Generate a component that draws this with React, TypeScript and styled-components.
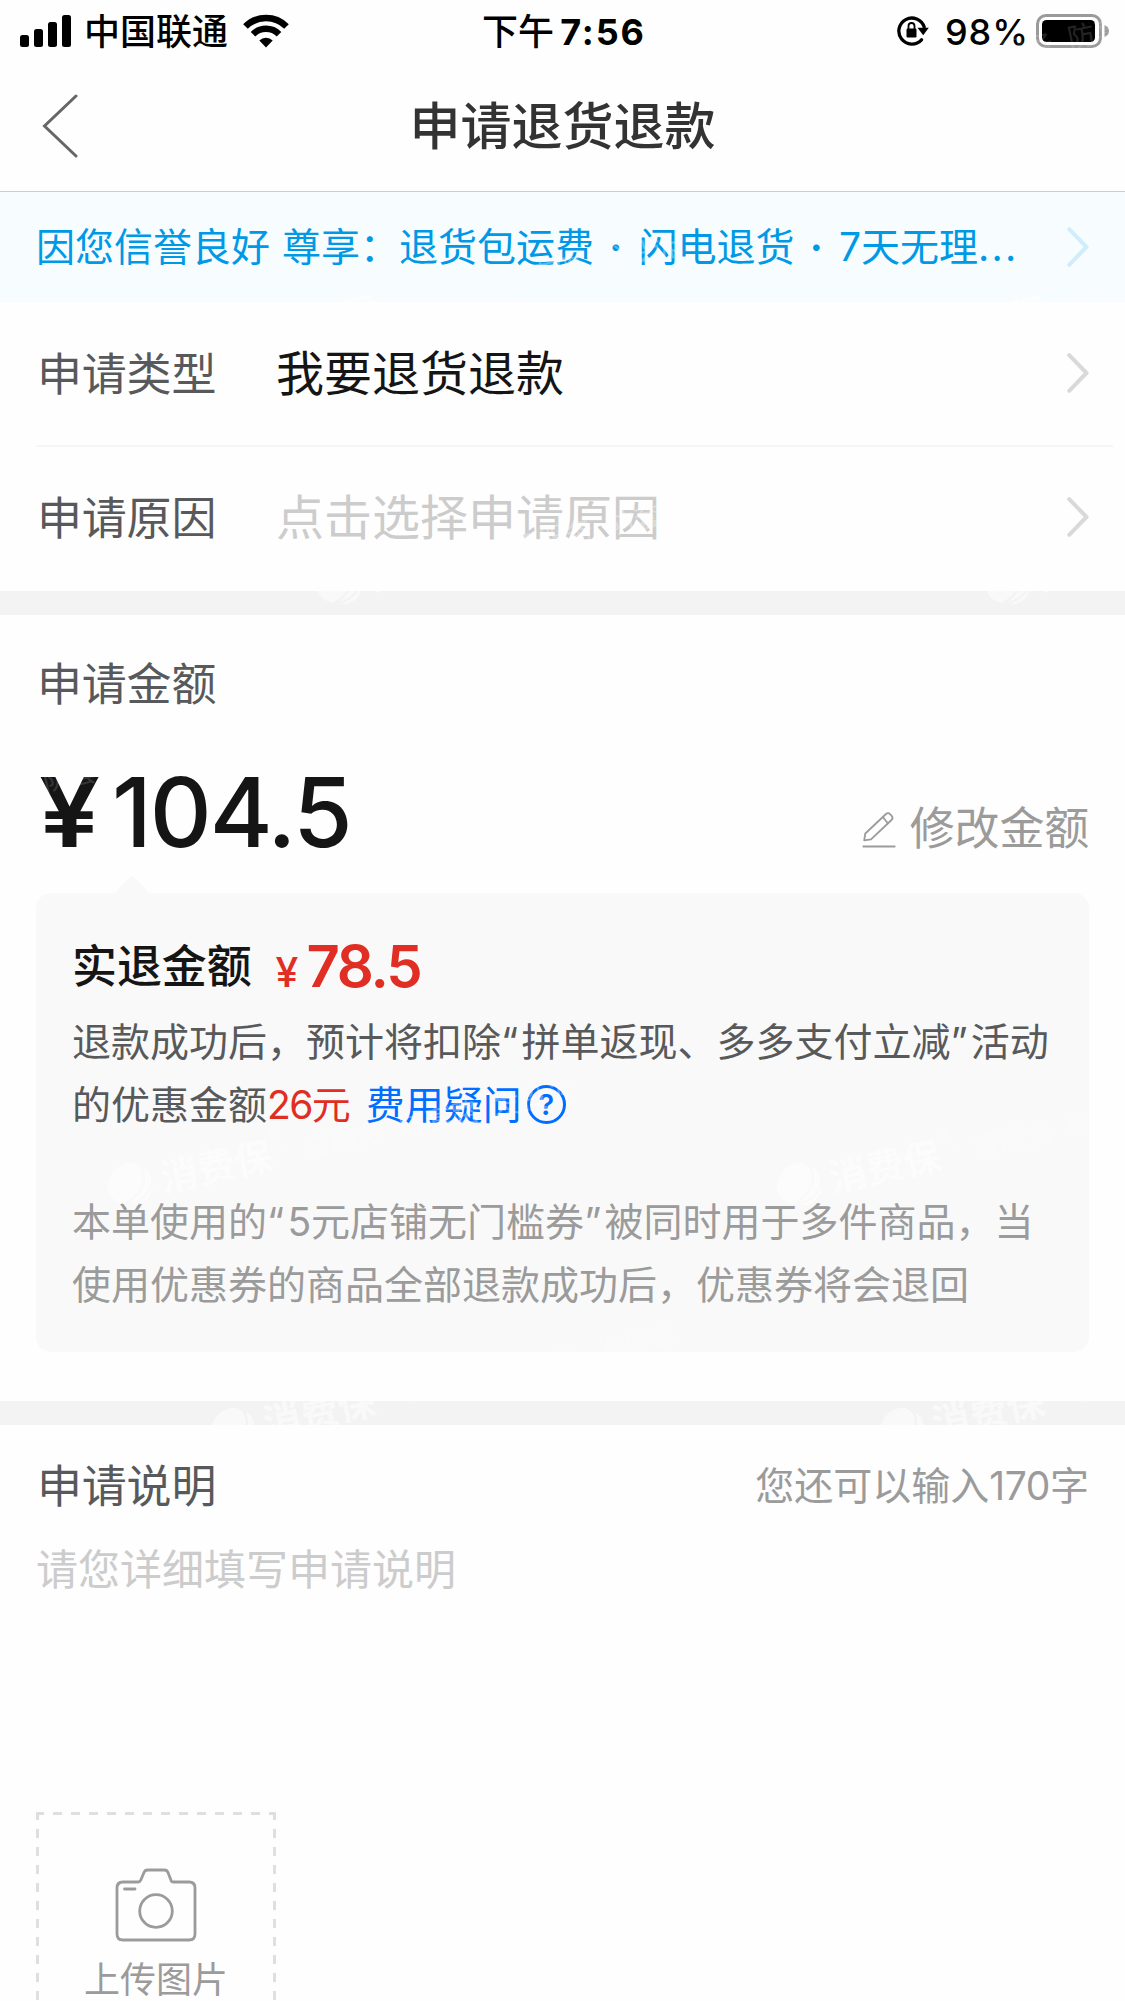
import React from "react";
import styled, { createGlobalStyle } from "styled-components";

const GlobalStyle = createGlobalStyle`
  * { box-sizing: border-box; }
  html, body { margin: 0; padding: 0; background: #fff; }
  body { overflow: hidden; }
`;

const Screen = styled.main`
  position: relative;
  width: 1125px;
  height: 2001px;
  overflow: hidden;
  background: #fefefe;
  color: #58595b;
  font-family: Inter, "Noto Sans CJK SC", sans-serif;
  display: flex;
  flex-direction: column;
  white-space: nowrap;
`;

const StatusBar = styled.header`
  height: 60px;
  flex: none;
  display: grid;
  grid-template-columns: 1fr auto 1fr;
  align-items: center;
  padding: 0 16px 0 20px;
  color: #000;
  font-size: 36px;
  line-height: 60px;
`;

const StatusGroup = styled.div<{ $end?: boolean }>`
  display: flex;
  align-items: center;
  height: 60px;
  justify-content: ${(p) => (p.$end ? "flex-end" : "flex-start")};
`;

const Carrier = styled.span`
  margin: 0 15px 0 12px;
  padding-top: 2px;
  font-weight: 500;
`;

const Clock = styled.div`
  display: flex;
  gap: 6px;
  padding: 2px 1px 0 0;
  font-weight: 500;
`;

const ClockDigits = styled.span`
  font-weight: 700;
  letter-spacing: 1.9px;
`;

const BatteryPercent = styled.span`
  margin: 0 7px 0 15px;
  padding-top: 2px;
  font-weight: 500;
  letter-spacing: 1px;
`;

const NavBar = styled.nav`
  height: 132px;
  flex: none;
  border-bottom: 1px solid #ccc;
  display: grid;
  grid-template-columns: 120px 1fr 120px;
  align-items: center;
  padding: 0;
`;

const BackButton = styled.button`
  border: 0;
  background: none;
  padding: 0 0 0 42px;
  height: 100%;
  display: flex;
  align-items: center;
`;

const Title = styled.h1`
  margin: 0;
  padding-top: 2px;
  text-align: center;
  font-size: 51px;
  line-height: 72px;
  font-weight: 500;
  color: #333;
`;

const Notice = styled.section`
  height: 110px;
  flex: none;
  display: flex;
  align-items: center;
  justify-content: space-between;
  padding: 0 36px;
  background: #f7fcff;
  color: #0099e5;
  font-size: 39px;
  line-height: 60px;
`;

const NoticeText = styled.span`
  word-spacing: 1px;
`;

const Dot = styled.span`
  margin: 0 6px 0 5px;
  font-weight: 700;
`;

const Ellipsis = styled.span`
  letter-spacing: 2.2px;
`;

const Row = styled.section<{ $height: number; $lift?: number }>`
  height: ${(p) => p.$height}px;
  flex: none;
  display: flex;
  align-items: center;
  padding: 0 36px ${(p) => p.$lift ?? 0}px;
`;

const Label = styled.span`
  padding: 2px 0 0 1px;
  font-size: 45px;
  line-height: 66px;
  letter-spacing: -0.2px;
`;

const RowLabel = styled(Label)`
  width: 240px;
`;

const RowValue = styled.span<{ $placeholder?: boolean }>`
  flex: 1;
  font-size: 48px;
  line-height: 66px;
  color: ${(p) => (p.$placeholder ? "#ccc" : "#151516")};
`;

const RowArrow = styled.span`
  display: flex;
  padding-bottom: 2px;
`;

const Divider = styled.hr`
  width: 1077px;
  height: 2px;
  flex: none;
  margin: 0 0 0 36px;
  border: 0;
  background: #f6f6f6;
`;

const Band = styled.div`
  height: 24px;
  flex: none;
  background: #f3f3f3;
`;

const AmountSection = styled.section`
  height: 786px;
  flex: none;
  padding: 35px 36px 0;
  display: flex;
  flex-direction: column;
`;

const AmountLine = styled.div`
  height: 174px;
  display: flex;
  align-items: flex-end;
  justify-content: space-between;
`;

const Amount = styled.div`
  display: flex;
  gap: 19px;
  padding: 0 0 22px 3px;
  font-size: 96px;
  line-height: 116px;
  font-weight: 600;
  color: #151516;
`;

const Yuan = styled.span`
  transform: scaleX(1.13);
  transform-origin: 0 50%;
`;

const AmountDigits = styled.span`
  font-weight: 500;
  letter-spacing: -2.1px;
`;

const EditButton = styled.button`
  border: 0;
  background: none;
  padding: 0 0 30px;
  display: flex;
  align-items: center;
  gap: 14px;
  font: inherit;
  font-size: 45px;
  line-height: 66px;
  letter-spacing: -0.2px;
  color: #9b9b9b;
`;

const Card = styled.article`
  position: relative;
  width: 1053px;
  height: 459px;
  margin-top: 1px;
  padding: 36px 36px 0;
  border-radius: 15px;
  background: #f9f9f9;
`;

const CardArrow = styled.svg`
  position: absolute;
  left: 78px;
  top: -18px;
`;

const RefundLine = styled.div`
  height: 81px;
  display: flex;
  align-items: flex-start;
`;

const RefundTitle = styled.strong`
  padding-top: 5px;
  font-size: 45px;
  line-height: 66px;
  font-weight: 500;
  letter-spacing: -0.1px;
  color: #151516;
`;

const RefundPrice = styled.span`
  display: flex;
  align-items: baseline;
  gap: 8px;
  margin-left: 24px;
  padding-top: 4px;
  color: #e02e24;
`;

const RefundYuan = styled.span`
  font-size: 41px;
  line-height: 66px;
  font-weight: 500;
`;

const RefundDigits = styled.span`
  font-size: 58px;
  line-height: 66px;
  font-weight: 600;
  letter-spacing: -2.2px;
`;

const Paragraph = styled.p<{ $muted?: boolean }>`
  margin: ${(p) => (p.$muted ? "54px 0 0" : "0")};
  font-size: 39px;
  line-height: 63px;
  color: ${(p) => (p.$muted ? "#9b9b9b" : "#58595b")};
`;

const Line = styled.span`
  display: flex;
  align-items: center;
  height: 63px;
`;

const Quote = styled.span`
  letter-spacing: 3.2px;
`;

const Deduction = styled.span`
  color: #e02e24;
  margin-right: 15px;
`;

const DeductionDigits = styled.span`
  letter-spacing: -1.6px;
`;

const HelpLink = styled.a`
  display: flex;
  align-items: center;
  gap: 5px;
  color: #006eff;
`;

const HelpBadge = styled.span`
  width: 39px;
  height: 39px;
  border: 3px solid #006eff;
  border-radius: 50%;
  display: flex;
  align-items: center;
  justify-content: center;
  font-size: 29px;
  line-height: 33px;
  font-weight: 600;
`;

const NoteHeader = styled.div`
  height: 66px;
  flex: none;
  margin-top: 28px;
  padding: 0 36px;
  display: flex;
  align-items: center;
  justify-content: space-between;
`;

const Counter = styled.span`
  font-size: 39px;
  line-height: 66px;
  color: #9b9b9b;
`;

const CounterDigits = styled.span`
  letter-spacing: -0.4px;
`;

const NotePlaceholder = styled.div`
  height: 277px;
  flex: none;
  margin-top: 17px;
  padding: 1px 36px 0;
  font-size: 42px;
  line-height: 66px;
  color: #ccc;
`;

const dash = (dir: string) =>
  `repeating-linear-gradient(${dir}, #dfdfdf 0 8px, transparent 8px 17px, #dfdfdf 17px 18px)`;

const UploadBox = styled.button`
  width: 240px;
  height: 240px;
  flex: none;
  margin: -1px 0 0 36px;
  padding: 56px 0 0;
  border: 0;
  background-color: transparent;
  background-image: ${dash("90deg")}, ${dash("180deg")}, ${dash("180deg")};
  background-size: 240px 3px, 3px 240px, 3px 240px;
  background-position: 0 0, 0 0, 237px 0;
  background-repeat: no-repeat;
  display: flex;
  flex-direction: column;
  align-items: center;
  gap: 12px;
  font: inherit;
  font-size: 36px;
  line-height: 52px;
  color: #9b9b9b;
`;

const WatermarkLayer = styled.div`
  position: absolute;
  inset: 0;
  overflow: hidden;
  pointer-events: none;
`;

const Watermark = styled.div<{ $x: number; $y: number }>`
  position: absolute;
  left: ${(p) => p.$x - 23}px;
  top: ${(p) => p.$y - 23}px;
  height: 46px;
  display: flex;
  align-items: center;
  transform: rotate(-12deg);
  transform-origin: 23px 23px;
  color: #fff;
  font-size: 27px;
  line-height: 46px;
`;

const WatermarkLogo = styled.svg`
  opacity: 0.55;
`;

const WatermarkBrand = styled.b`
  margin-left: 8px;
  font-size: 38px;
  opacity: 0.5;
`;

const WatermarkMark = styled.span`
  font-size: 21px;
  line-height: 22px;
  margin: -36px -4px 0 0;
  opacity: 0.45;
`;

const WatermarkSlogan = styled.span<{ $faint?: boolean }>`
  word-spacing: 8px;
  opacity: ${(p) => (p.$faint ? 0.14 : 0.32)};
`;

const Chevron = ({ color }: { color: string }) => (
  <svg width="22" height="40" viewBox="0 0 22 40" fill="none">
    <path d="M2.2 2.2 19.5 20 2.2 37.8" stroke={color} strokeWidth="4" strokeLinecap="round" strokeLinejoin="round" />
  </svg>
);

const SignalIcon = () => (
  <svg width="52" height="34" viewBox="0 0 52 34">
    <rect x="0" y="21" width="9" height="12" rx="2.5" />
    <rect x="14" y="15" width="9" height="18" rx="2.5" />
    <rect x="28" y="8" width="9" height="25" rx="2.5" />
    <rect x="42" y="1" width="9" height="32" rx="2.5" />
  </svg>
);

const WifiIcon = () => (
  <svg width="46" height="34" viewBox="0 0 46 34" fill="none">
    <path d="M2.5 12.5a29 29 0 0 1 41 0" stroke="#000" strokeWidth="6.500" />
    <path d="M10 20.2a18.500 18.500 0 0 1 26 0" stroke="#000" strokeWidth="6.500" />
    <path d="M16.300 26.500a9.600 9.600 0 0 1 13.400 0L23 33.400Z" fill="#000" />
  </svg>
);

const OrientationLockIcon = () => (
  <svg width="34" height="32" viewBox="0 0 34 32" fill="none">
    <path d="M28.200 12A13 13 0 1 0 25.500 24.800" stroke="#000" strokeWidth="3.300" strokeLinecap="round" />
    <path d="M21.500 12.800h11.300l-5.600 7.400Z" fill="#000" />
    <rect x="10.500" y="13.500" width="10" height="9" rx="1.200" fill="#000" />
    <path d="M12.500 14v-3a3 3 0 0 1 6 0v3" stroke="#000" strokeWidth="1.800" />
  </svg>
);

const BatteryIcon = () => (
  <svg width="73" height="34" viewBox="0 0 73 34" fill="none">
    <rect x="1.500" y="1.500" width="63" height="31" rx="8.500" stroke="#9a9a9a" strokeWidth="3" />
    <rect x="6" y="6" width="53" height="22" rx="4.500" fill="#000" />
    <path d="M68.500 11q4.500 2 4.500 6t-4.500 6Z" fill="#9a9a9a" />
  </svg>
);

const BackIcon = () => (
  <svg width="36" height="64" viewBox="0 0 36 64" fill="none">
    <path d="M34 2 2.500 32 34 62" stroke="#666" strokeWidth="3" strokeLinecap="round" />
  </svg>
);

const PencilIcon = () => (
  <svg width="34" height="38" viewBox="0 0 34 38" fill="none" stroke="#9b9b9b" strokeWidth="1.800" strokeLinecap="round" strokeLinejoin="round">
    <path d="M2.200 30.300 3.300 23.500 24 4q2.200-1.800 4.300.3l1.500 1.700q1.600 2-.3 4L9 29.400Z" />
    <path d="m21 7.200 4.800 6M1.300 36.500h31.400" />
  </svg>
);

const CameraIcon = () => (
  <svg width="82" height="74" viewBox="0 0 82 74" fill="none" stroke="#9b9b9b" strokeWidth="2.800" strokeLinecap="round" strokeLinejoin="round">
    <path d="M8 14H23q2 0 2.700-1.700L29 4.500Q30 2 32.500 2h17Q52 2 53 4.500l3 7.800Q56.500 14 58.500 14H74q6 0 6 6v46q0 6-6 6H8q-6 0-6-6V20q0-6 6-6Z" />
    <circle cx="41" cy="43" r="16.300" />
    <path d="M9.500 21h10.500" />
  </svg>
);

const BrandLogo = () => (
  <WatermarkLogo width="46" height="46" viewBox="0 0 46 46" fill="#fff">
    <path d="M25 1C8 2 0 15 1 26c1 7 6 12 12 14 16-5 27-17 24-31Q33 1 25 1Z" />
    <path d="M39 8C43 22 32 35 18 41 34 40 46 30 45 17Q43 11 39 8Z" />
    <path d="M46 24C44 34 34 41 20 43 31 47 44 40 46 24Z" />
  </WatermarkLogo>
);

const WATERMARKS = [
  { x: 799, y: 97, faint: true },
  { x: 235, y: 340 },
  { x: 904, y: 340 },
  { x: 339, y: 584 },
  { x: 1008, y: 584 },
  { x: -226, y: 840, faint: true },
  { x: 130, y: 1185 },
  { x: 799, y: 1185 },
  { x: 233, y: 1430 },
  { x: 902, y: 1430 },
];

export default function App() {
  return (
    <>
      <GlobalStyle />
      <Screen lang="zh-CN">
        <StatusBar>
          <StatusGroup>
            <SignalIcon />
            <Carrier>中国联通</Carrier>
            <WifiIcon />
          </StatusGroup>
          <Clock>
            <span>下午</span>
            <ClockDigits>7:56</ClockDigits>
          </Clock>
          <StatusGroup $end>
            <OrientationLockIcon />
            <BatteryPercent>98%</BatteryPercent>
            <BatteryIcon />
          </StatusGroup>
        </StatusBar>

        <NavBar>
          <BackButton aria-label="返回">
            <BackIcon />
          </BackButton>
          <Title>申请退货退款</Title>
        </NavBar>

        <Notice>
          <NoticeText>
            因您信誉良好 尊享：退货包运费<Dot> · </Dot>闪电退货<Dot> · </Dot>7天无理<Ellipsis>...</Ellipsis>
          </NoticeText>
          <Chevron color="#d0edfb" />
        </Notice>

        <Row $height={143}>
          <RowLabel>申请类型</RowLabel>
          <RowValue>我要退货退款</RowValue>
          <RowArrow>
            <Chevron color="#d9d9d9" />
          </RowArrow>
        </Row>
        <Divider />
        <Row $height={144} $lift={2}>
          <RowLabel>申请原因</RowLabel>
          <RowValue $placeholder>点击选择申请原因</RowValue>
          <RowArrow>
            <Chevron color="#d9d9d9" />
          </RowArrow>
        </Row>

        <Band />

        <AmountSection>
          <Label>申请金额</Label>
          <AmountLine>
            <Amount>
              <Yuan>¥</Yuan>
              <AmountDigits>104.5</AmountDigits>
            </Amount>
            <EditButton>
              <PencilIcon />
              修改金额
            </EditButton>
          </AmountLine>
          <Card>
            <CardArrow width="36" height="19" viewBox="0 0 36 19">
              <path d="M0 19 15.500 2.500q2.500-2.500 5 0L36 19Z" fill="#f9f9f9" />
            </CardArrow>
            <RefundLine>
              <RefundTitle>实退金额</RefundTitle>
              <RefundPrice>
                <RefundYuan>¥</RefundYuan>
                <RefundDigits>78.5</RefundDigits>
              </RefundPrice>
            </RefundLine>
            <Paragraph>
              <Line>
                退款成功后，预计将扣除<Quote>“</Quote>拼单返现、多多支付立减<Quote>”</Quote>活动
              </Line>
              <Line>
                的优惠金额
                <Deduction>
                  <DeductionDigits>26</DeductionDigits>元
                </Deduction>
                <HelpLink>
                  费用疑问<HelpBadge>?</HelpBadge>
                </HelpLink>
              </Line>
            </Paragraph>
            <Paragraph $muted>
              <Line>
                本单使用的<Quote>“</Quote>5元店铺无门槛券<Quote>”</Quote>被同时用于多件商品，当
              </Line>
              <Line>使用优惠券的商品全部退款成功后，优惠券将会退回</Line>
            </Paragraph>
          </Card>
        </AmountSection>

        <Band />

        <NoteHeader>
          <Label>申请说明</Label>
          <Counter>
            您还可以输入<CounterDigits>170</CounterDigits>字
          </Counter>
        </NoteHeader>
        <NotePlaceholder>请您详细填写申请说明</NotePlaceholder>
        <UploadBox>
          <CameraIcon />
          上传图片
        </UploadBox>

        <WatermarkLayer aria-hidden="true">
          {WATERMARKS.map((mark) => (
            <Watermark key={`${mark.x}-${mark.y}`} $x={mark.x} $y={mark.y}>
              <BrandLogo />
              <WatermarkBrand>消费保</WatermarkBrand>
              <WatermarkMark>®</WatermarkMark>
              <WatermarkSlogan $faint={mark.faint}>· 查服务 防套路 发投诉</WatermarkSlogan>
            </Watermark>
          ))}
        </WatermarkLayer>
      </Screen>
    </>
  );
}
